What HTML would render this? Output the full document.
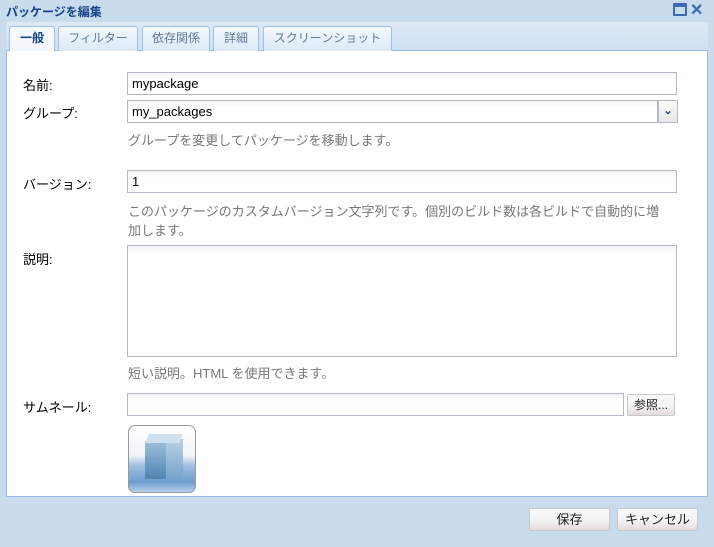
<!DOCTYPE html>
<html><head><meta charset="utf-8"><style>
*{box-sizing:border-box;margin:0;padding:0}
body{width:714px;height:547px;background:#c9dced;font-family:"Liberation Sans","Noto Sans CJK JP",sans-serif;font-size:13px;color:#000;position:relative;overflow:hidden}
.abs{position:absolute}
.title{left:6px;top:3px;font-weight:bold;font-size:12px;color:#15428b}
.tabs{left:6px;top:22px;width:702px;height:29px;background:linear-gradient(#dde9f5,#cfe1f1);border-bottom:1px solid #99bbe8}
.tab{position:absolute;top:4px;height:25px;border:1px solid #9fc0e4;border-bottom:none;border-radius:3px 3px 0 0;background:linear-gradient(#f4f9fe,#dce9f6);color:#627b9b;font-size:12px;text-align:center;line-height:23px}
.tab.on{background:#f5f9fd;color:#15428b;font-weight:bold;height:26px}
.main{left:6px;top:51px;width:702px;height:446px;background:#fff;border:1px solid #99bbe8;border-top:none}
.lbl{font-size:13px;color:#000}
.inp{border:1px solid #b5b8c8;background:linear-gradient(#f4f4f4,#fff 8px);height:23px;padding:3px 4px;font-size:13px}
.help{color:#777;font-size:13px;line-height:19px}
.btn{border:1px solid #c8c8c8;background:linear-gradient(#fafafa 0,#f2f2f2 60%,#e6d9dc);font-size:13px;text-align:center;border-radius:2px;color:#222}
</style></head><body>
<div class="abs title">パッケージを編集</div>
<div class="abs" style="left:673px;top:3px;width:14px;height:13px;border:2px solid #3a6ab0;border-top-width:4px;border-radius:1px"></div>
<div class="abs" style="left:690px;top:0px;font-size:16px;color:#3a6ab0;font-weight:bold">✕</div>
<div class="abs tabs">
 <div class="tab on" style="left:3px;width:46px">一般</div>
 <div class="tab" style="left:52px;width:80px">フィルター</div>
 <div class="tab" style="left:136px;width:68px">依存関係</div>
 <div class="tab" style="left:207px;width:46px">詳細</div>
 <div class="tab" style="left:257px;width:129px">スクリーンショット</div>
</div>
<div class="abs main"></div>
<div class="abs lbl" style="left:23px;top:75px">名前:</div>
<div class="abs inp" style="left:127px;top:72px;width:550px">mypackage</div>
<div class="abs lbl" style="left:23px;top:103px">グループ:</div>
<div class="abs inp" style="left:127px;top:100px;width:531px">my_packages</div>
<div class="abs" style="left:658px;top:100px;width:20px;height:23px;border:1px solid #b5b8c8;background:linear-gradient(#fafafa,#e8e8e8);color:#2b4d80;text-align:center;font-size:11px;line-height:21px;font-weight:bold">⌄</div>
<div class="abs help" style="left:128px;top:131px">グループを変更してパッケージを移動します。</div>
<div class="abs lbl" style="left:23px;top:174px">バージョン:</div>
<div class="abs inp" style="left:127px;top:170px;width:550px">1</div>
<div class="abs help" style="left:128px;top:202px;width:538px">このパッケージのカスタムバージョン文字列です。個別のビルド数は各ビルドで自動的に増加します。</div>
<div class="abs lbl" style="left:23px;top:249px">説明:</div>
<div class="abs inp" style="left:127px;top:245px;width:550px;height:112px"></div>
<div class="abs help" style="left:128px;top:364px">短い説明。HTML を使用できます。</div>
<div class="abs lbl" style="left:23px;top:397px">サムネール:</div>
<div class="abs inp" style="left:127px;top:393px;width:497px"></div>
<div class="abs btn" style="left:627px;top:394px;width:48px;height:22px;line-height:20px;font-size:12px">参照...</div>
<div class="abs" style="left:128px;top:425px;width:68px;height:68px;border:1px solid #999;border-radius:7px;background:linear-gradient(#fff 0,#f0f4f8 45%,#9fbfe0 60%,#6d9ccc 85%,#b8d0ea);overflow:hidden">
 <div style="position:absolute;left:16px;top:15px;width:21px;height:38px;background:linear-gradient(#9ec0da,#4e84b3)"></div>
 <div style="position:absolute;left:37px;top:13px;width:17px;height:38px;background:linear-gradient(#b8d2e6,#7aa6cc)"></div>
 <div style="position:absolute;left:18px;top:8px;width:34px;height:9px;background:#cfe0ee;transform:skewX(-20deg)"></div>
</div>
<div class="abs btn" style="left:529px;top:508px;width:81px;height:23px;line-height:21px">保存</div>
<div class="abs btn" style="left:617px;top:508px;width:81px;height:23px;line-height:21px">キャンセル</div>
</body></html>
